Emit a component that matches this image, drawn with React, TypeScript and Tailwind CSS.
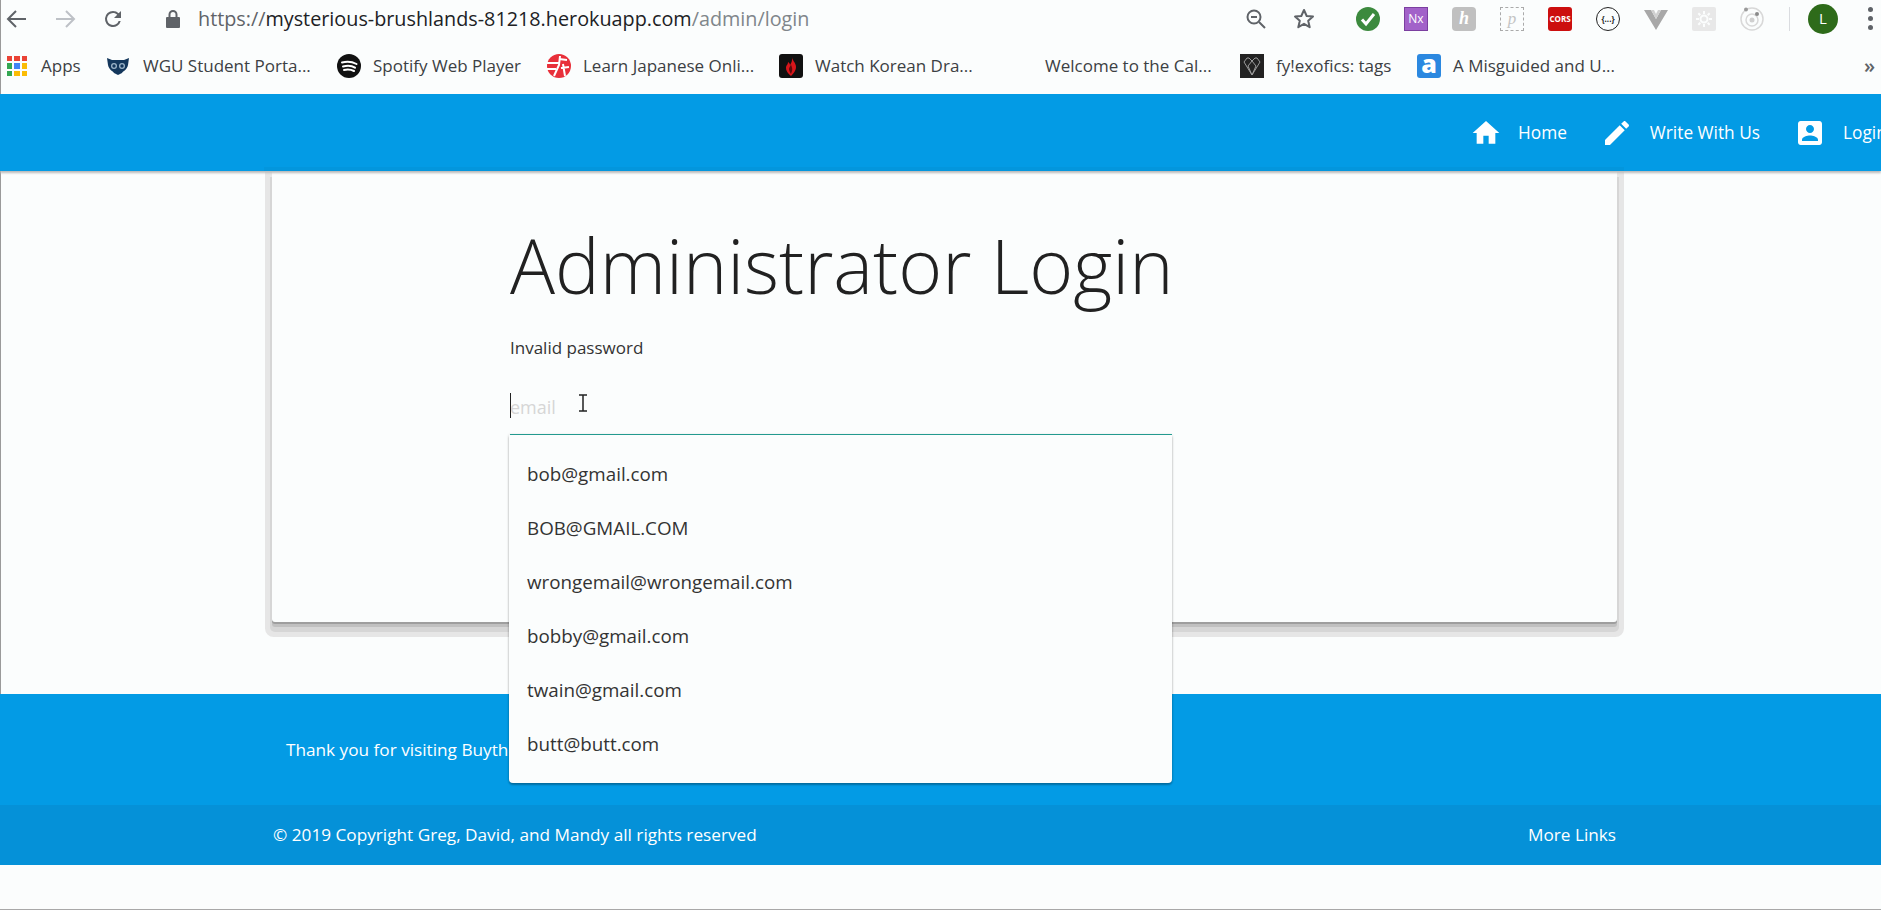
const font = { fontFamily: '"Open Sans", "Noto Sans", sans-serif' }

const bookmarks = [
  { label: 'Apps', width: 'w-[100px]', icon: 'apps' },
  { label: 'WGU Student Porta...', width: 'w-[230px]', icon: 'owl' },
  { label: 'Spotify Web Player', width: 'w-[210px]', icon: 'spotify' },
  { label: 'Learn Japanese Onli...', width: 'w-[232px]', icon: 'learn' },
  { label: 'Watch Korean Dra...', width: 'w-[230px]', icon: 'flame' },
  { label: 'Welcome to the Cal...', width: 'w-[231px]', icon: 'blank' },
  { label: 'fy!exofics: tags', width: 'w-[177px]', icon: 'gem' },
  { label: 'A Misguided and U...', width: 'w-[210px]', icon: 'a' },
]

const emails = ['bob@gmail.com', 'BOB@GMAIL.COM', 'wrongemail@wrongemail.com', 'bobby@gmail.com', 'twain@gmail.com', 'butt@butt.com']

function BookmarkIcon({ name }: { name: string }) {
  if (name === 'apps') {
    const colors = ['#ea4335', '#ea4335', '#ea4335', '#34a853', '#4285f4', '#fbbc05', '#34a853', '#fbbc05', '#fbbc05']
    return (
      <div className="grid grid-cols-3 gap-[2px] w-[20px] h-[20px] mr-[2px]">
        {colors.map((c, i) => <span key={i} style={{ background: c }} />)}
      </div>
    )
  }
  if (name === 'owl') {
    return (
      <svg width="24" height="18" viewBox="0 0 24 18">
        <path d="M0 1l5 2h12l5-2-1 7c-1 5-5 6-6 8l-4 2-4-2c-1-2-5-3-6-8z" fill="#14375c" />
        <circle cx="7" cy="9" r="3" fill="#9db4c9" />
        <circle cx="15" cy="9" r="3" fill="#9db4c9" />
        <circle cx="7" cy="9" r="1.700" fill="#14375c" />
        <circle cx="15" cy="9" r="1.700" fill="#14375c" />
      </svg>
    )
  }
  if (name === 'spotify') {
    return (
      <svg width="24" height="24" viewBox="0 0 24 24">
        <circle cx="12" cy="12" r="12" fill="#111" />
        <path d="M5 8.500c5-1.500 10-1 14.500 1.500M6 12.500c4-1 9-.7 12 1.200M7 16c3.500-.8 7-.5 10 1" stroke="#fff" strokeWidth="2" fill="none" strokeLinecap="round" />
      </svg>
    )
  }
  if (name === 'learn') {
    return (
      <svg width="24" height="24" viewBox="0 0 24 24">
        <circle cx="12" cy="12" r="12" fill="#e8303a" />
        <path d="M0 9h12M0 15h9M12 5l8 1M13 2l-1 9-5 11M16 10l2 12M14 14l8-1" stroke="#fff" strokeWidth="2" fill="none" />
      </svg>
    )
  }
  if (name === 'flame') {
    return (
      <svg width="24" height="24" viewBox="0 0 24 24">
        <rect width="24" height="24" rx="3" fill="#111" />
        <path d="M13 3c0 3 4 6 4 10 0 4-3 7-5 9-1-1-5-4-5-8 0-3 2-3 2-6 1.500 1 2 2 2 3 1.500-2 2.500-5 2-8z" fill="#d8161b" />
        <path d="M12 10c0 2 2 4 1 7l-1 3c-1-2-2-3-2-5s2-3 2-5z" fill="#5c0a0c" />
      </svg>
    )
  }
  if (name === 'gem') {
    return (
      <svg width="24" height="24" viewBox="0 0 24 24">
        <rect width="24" height="24" fill="#222" />
        <path d="M12 7l-3-3H7L4 8l8 13 8-13-3-4h-2zM12 7L8 12l4 9 4-9z" stroke="#9a9a9a" strokeWidth="1" fill="none" />
      </svg>
    )
  }
  if (name === 'a') {
    return (
      <div className="w-6 h-6 rounded-[3px] bg-[#2b88e0] flex items-center justify-center text-white text-[25px] font-extrabold leading-none pb-[5px]">a</div>
    )
  }
  return <div className="w-6 h-6" />
}

function ChromeIcons() {
  return (
    <div className="ml-auto flex items-center">
      <div className="w-12 flex justify-center">
        <svg width="24" height="24" viewBox="0 0 24 24" fill="none" stroke="#5f6368" strokeWidth="2">
          <circle cx="10" cy="10" r="6.500" />
          <path d="M7 10h6M15 15l6 6" />
        </svg>
      </div>
      <div className="w-12 flex justify-center">
        <svg width="24" height="24" viewBox="0 0 24 24" fill="none" stroke="#5f6368" strokeWidth="2" strokeLinejoin="round">
          <path d="M12 3l2.700 6 6.300.6-4.800 4.200 1.500 6.400L12 16.800 6.300 20.200l1.500-6.400L3 9.600 9.300 9z" />
        </svg>
      </div>
      <div className="w-4" />
      <div className="w-12 flex justify-center">
        <svg width="24" height="24" viewBox="0 0 24 24">
          <circle cx="12" cy="12" r="12" fill="#3c8a3e" />
          <path d="M6 12.500l4 4.500 8-10" stroke="#fff" strokeWidth="3" fill="none" />
        </svg>
      </div>
      <div className="w-12 flex justify-center">
        <div className="w-6 h-6 border border-[#7b3fa0] bg-[#a262c9] text-white text-[12px] flex items-center justify-center">Nx</div>
      </div>
      <div className="w-12 flex justify-center">
        <div className="w-6 h-6 rounded-[4px] bg-[#c0c0c0] text-white text-[18px] font-semibold italic flex items-center justify-center" style={{ fontFamily: '"Liberation Serif", serif' }}>h</div>
      </div>
      <div className="w-12 flex justify-center">
        <div className="w-6 h-6 border border-dashed border-[#aaa] text-[#c4c4c4] text-[17px] italic flex items-center justify-center" style={{ fontFamily: '"Liberation Serif", serif' }}>p</div>
      </div>
      <div className="w-12 flex justify-center">
        <div className="w-6 h-6 rounded-[3px] bg-[#cc0f0f] text-white text-[8px] font-bold flex items-center justify-center">CORS</div>
      </div>
      <div className="w-12 flex justify-center">
        <div className="w-6 h-6 rounded-full border-[1.5px] border-[#222] text-[#222] text-[8px] font-bold flex items-center justify-center">{'{...}'}</div>
      </div>
      <div className="w-12 flex justify-center">
        <svg width="24" height="24" viewBox="0 0 24 24">
          <path d="M0 3h7l5 9 5-9h7L12 23z" fill="#a8a8a8" />
          <path d="M7 3h3l2 4 2-4h3l-5 9z" fill="#d0d0d0" />
        </svg>
      </div>
      <div className="w-12 flex justify-center">
        <div className="w-6 h-6 rounded-[2px] bg-[#e8e8e8] flex items-center justify-center">
          <svg width="18" height="18" viewBox="0 0 18 18" fill="none" stroke="#fbfdfd" strokeWidth="2">
            <circle cx="9" cy="9" r="3.500" />
            <path d="M9 1v3M9 14v3M1 9h3M14 9h3M3.300 3.300l2 2M12.700 12.700l2 2M14.700 3.300l-2 2M5.300 12.700l-2 2" />
          </svg>
        </div>
      </div>
      <div className="w-12 flex justify-center">
        <svg width="24" height="24" viewBox="0 0 24 24" fill="none">
          <circle cx="12" cy="12" r="11" stroke="#d8d8d8" strokeWidth="1.500" />
          <circle cx="12" cy="13" r="6" stroke="#d8d8d8" strokeWidth="1.500" />
          <circle cx="12" cy="13" r="2.500" fill="#d0d0d0" />
          <circle cx="6" cy="2.500" r="2" fill="#9a9a9a" />
          <circle cx="17" cy="7" r="2" fill="#8a8a8a" />
        </svg>
      </div>
      <div className="w-[13px]" />
      <div className="w-px h-[24px] bg-[#dadce0]" />
      <div className="w-[18px]" />
      <div className="w-[30px] h-[30px] rounded-full bg-[#2e6b1a] text-white text-[15px] flex items-center justify-center">L</div>
      <div className="w-[43px] flex justify-end pr-2">
        <div className="flex flex-col gap-1">
          <span className="w-[5px] h-[5px] rounded-full bg-[#5f6368]" />
          <span className="w-[5px] h-[5px] rounded-full bg-[#5f6368]" />
          <span className="w-[5px] h-[5px] rounded-full bg-[#5f6368]" />
        </div>
      </div>
    </div>
  )
}

function NavItem({ d, label, gap }: { d: string; label: string; gap: string }) {
  return (
    <a className={`flex shrink-0 items-center whitespace-nowrap ${gap} text-white text-[17.3px]`}>
      <svg width="32" height="32" viewBox="0 0 24 24" fill="#fff"><path d={d} /></svg>
      <span>{label}</span>
    </a>
  )
}

export default function App() {
  return (
    <div className="relative h-[910px] w-[1881px] overflow-hidden bg-[#fbfdfd] border-b border-[#a8a8a8]" style={font}>
      {/* browser */}
      <div className="h-[94px] border-l border-[#9a9a9a]">
        <div className="h-[37px] flex items-center ml-[-8px]">
          <div className="w-12 flex justify-center">
            <svg width="24" height="24" viewBox="0 0 24 24" fill="none" stroke="#5f6368" strokeWidth="2"><path d="M21 12H4M11 4l-8 8 8 8" /></svg>
          </div>
          <div className="w-12 flex justify-center">
            <svg width="24" height="24" viewBox="0 0 24 24" fill="none" stroke="#bdc1c6" strokeWidth="2"><path d="M3 12h17M13 4l8 8-8 8" /></svg>
          </div>
          <div className="w-12 flex justify-center">
            <svg width="24" height="24" viewBox="0 0 24 24" fill="#5f6368"><path d="M17.650 6.350A7.950 7.950 0 0 0 12 4a8 8 0 1 0 7.730 10h-2.080A6 6 0 1 1 12 6c1.660 0 3.140.69 4.220 1.780L13 11h7V4z" /></svg>
          </div>
          <div className="ml-6 w-6 flex justify-center">
            <svg width="16" height="20" viewBox="0 0 16 20" fill="#5f6368"><path d="M8 1a4.500 4.500 0 0 0-4.500 4.500V8H2a1 1 0 0 0-1 1v9a1 1 0 0 0 1 1h12a1 1 0 0 0 1-1V9a1 1 0 0 0-1-1h-1.500V5.500A4.500 4.500 0 0 0 8 1zm-2.500 7V5.500a2.500 2.500 0 0 1 5 0V8z" /></svg>
          </div>
          <div className="ml-[13px] text-[19.8px] text-[#202124]">
            <span className="text-[#5f6368]">https://</span>mysterious-brushlands-81218.herokuapp.com<span className="text-[#80868b]">/admin/login</span>
          </div>
          <ChromeIcons />
        </div>
        <div className="h-[57px] pt-px flex items-center pl-[6px] text-[17px] text-[#3c4043]">
          {bookmarks.map(b => (
            <div key={b.label} className={`flex items-center gap-3 shrink-0 whitespace-nowrap ${b.width}`}>
              <BookmarkIcon name={b.icon} />
              <span>{b.label}</span>
            </div>
          ))}
          <span className="ml-auto mr-[6px] text-[#5f6368] text-[20px] font-semibold">»</span>
        </div>
      </div>

      {/* nav */}
      <nav className="relative z-[5] h-[77px] bg-[#039be5] shadow-[0_2px_2px_#bbbbbb] flex items-center gap-[34px] pl-[1470px]">
        <div className="absolute bottom-0 left-[264px] w-[1360px] h-1 bg-[#0396dd]" />
        <NavItem label="Home" gap="gap-4" d="M10 20v-6h4v6h5v-8h3L12 3 2 12h3v8z" />
        <NavItem label="Write With Us" gap="gap-[17px]" d="M3 17.250V21h3.750L17.810 9.940l-3.750-3.750L3 17.250zM20.710 7.040c.39-.39.39-1.020 0-1.410l-2.340-2.340c-.39-.39-1.020-.39-1.410 0l-1.830 1.830 3.750 3.750 1.830-1.830z" />
        <NavItem label="Login" gap="gap-[17px]" d="M3 5v14c0 1.100.89 2 2 2h14c1.100 0 2-.9 2-2V5c0-1.100-.9-2-2-2H5c-1.110 0-2 .9-2 2zm12 4c0 1.660-1.340 3-3 3s-3-1.340-3-3 1.340-3 3-3 3 1.340 3 3zm-9 8c0-2 4-3.100 6-3.100s6 1.100 6 3.100v1H6v-1z" />
      </nav>

      {/* card */}
      <main className="h-[523px] border-l border-[#9a9a9a] pl-[271px]">
        <div className="w-[1345px] h-[451px] pl-[238px] pt-[48px] bg-[#fbfdfd] rounded-b-[3px] shadow-[0_2px_0_0_#9e9e9e,0_5px_0_0_#c0c0c0,0_8px_0_2px_#d6d6d6,0_8px_0_7px_#e6e6e6]">
          <h1 className="text-[75px] leading-[92px] font-light text-[#212121] whitespace-nowrap">Administrator Login</h1>
          <p className="mt-[25px] text-[17px] leading-6 text-[#333]">Invalid password</p>
          <div className="relative mt-[21px] w-[662px]">
            <input
              placeholder="email"
              className="block w-full h-[54px] pb-[2px] border-b border-[#26a69a] bg-transparent text-[18px] outline-none placeholder:text-[#d6d6d6]"
            />
            <span className="absolute left-0 top-[12px] w-px h-[25px] bg-[#222]" />
            <svg className="absolute left-[68px] top-[13px]" width="10" height="18" viewBox="0 0 10 18" fill="none" stroke="#222" strokeWidth="1.500">
              <path d="M1 1h8M5 1v16M1 17h8" />
            </svg>
            <ul className="absolute z-10 top-full left-[-1px] w-[663px] py-3 bg-[#fbfdfd] rounded-[4px] rounded-t-none shadow-[0_2px_2px_rgba(0,0,0,0.25),0_0_3px_rgba(0,0,0,0.2)]">
              {emails.map(e => (
                <li key={e} className="h-[54px] flex items-center pl-[18px] text-[18.8px] text-[#333]">{e}</li>
              ))}
            </ul>
          </div>
        </div>
      </main>

      {/* footer */}
      <footer className="text-[17.2px] text-white">
        <div className="h-[111px] bg-[#039be5] pl-[286px] pt-[44px] leading-6">Thank you for visiting Buythebook</div>
        <div className="h-[60px] bg-[#0591d8] pl-[273px] pr-[265px] flex items-center justify-between">
          <span>© 2019 Copyright Greg, David, and Mandy all rights reserved</span>
          <span>More Links</span>
        </div>
      </footer>
    </div>
  )
}
